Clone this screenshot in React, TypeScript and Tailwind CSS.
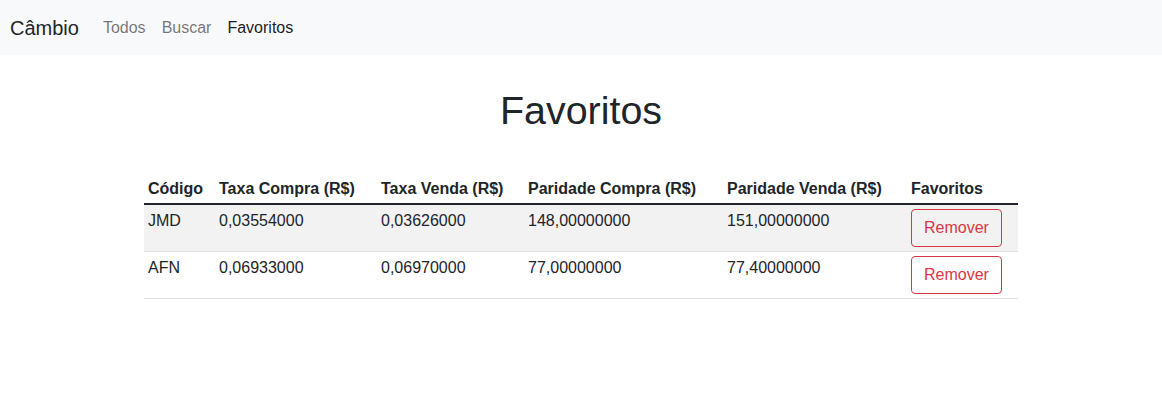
import React from "react";

const favoritos = [
  { codigo: "JMD", taxaCompra: "0,03554000", taxaVenda: "0,03626000", parCompra: "148,00000000", parVenda: "151,00000000" },
  { codigo: "AFN", taxaCompra: "0,06933000", taxaVenda: "0,06970000", parCompra: "77,00000000", parVenda: "77,40000000" },
];

const App = () => {
  return (
    <div className="min-h-screen bg-white text-[#212529] font-['Liberation_Sans',Arial,sans-serif] text-base leading-6">
      <nav className="flex items-center h-[55px] bg-[#f8f9fa] px-[10px]">
        <span className="text-[20px] leading-[30px] mr-4">Câmbio</span>
        <a className="px-2 text-black/55">Todos</a>
        <a className="px-2 text-black/55">Buscar</a>
        <a className="px-2 text-black/90">Favoritos</a>
      </nav>

      <h1 className="mt-8 text-center text-[39.4px] leading-[1.2] font-normal">Favoritos</h1>

      <table className="mt-[37px] mx-auto w-[874px] table-fixed border-collapse text-left">
        <thead>
          <tr className="border-b-2 border-[#212529]">
            <th className="w-[71px] px-1 pt-[6px] pb-[2px] font-bold">Código</th>
            <th className="w-[162px] px-1 pt-[6px] pb-[2px] font-bold">Taxa Compra (R$)</th>
            <th className="w-[147px] px-1 pt-[6px] pb-[2px] font-bold">Taxa Venda (R$)</th>
            <th className="w-[199px] px-1 pt-[6px] pb-[2px] font-bold">Paridade Compra (R$)</th>
            <th className="w-[184px] px-1 pt-[6px] pb-[2px] font-bold">Paridade Venda (R$)</th>
            <th className="w-[111px] px-1 pt-[6px] pb-[2px] font-bold">Favoritos</th>
          </tr>
        </thead>
        <tbody>
          {favoritos.map((f, i) => (
            <tr key={f.codigo} className={`border-b border-[#dee2e6] ${i % 2 === 0 ? "bg-[#f2f2f2]" : "bg-white"}`}>
              <td className="p-1 align-top">{f.codigo}</td>
              <td className="p-1 align-top">{f.taxaCompra}</td>
              <td className="p-1 align-top">{f.taxaVenda}</td>
              <td className="p-1 align-top">{f.parCompra}</td>
              <td className="p-1 align-top">{f.parVenda}</td>
              <td className="p-1 align-top">
                <button className="h-[38px] px-3 border border-[#dc3545] rounded text-[#dc3545] bg-transparent">
                  Remover
                </button>
              </td>
            </tr>
          ))}
        </tbody>
      </table>
    </div>
  );
};

export default App;
